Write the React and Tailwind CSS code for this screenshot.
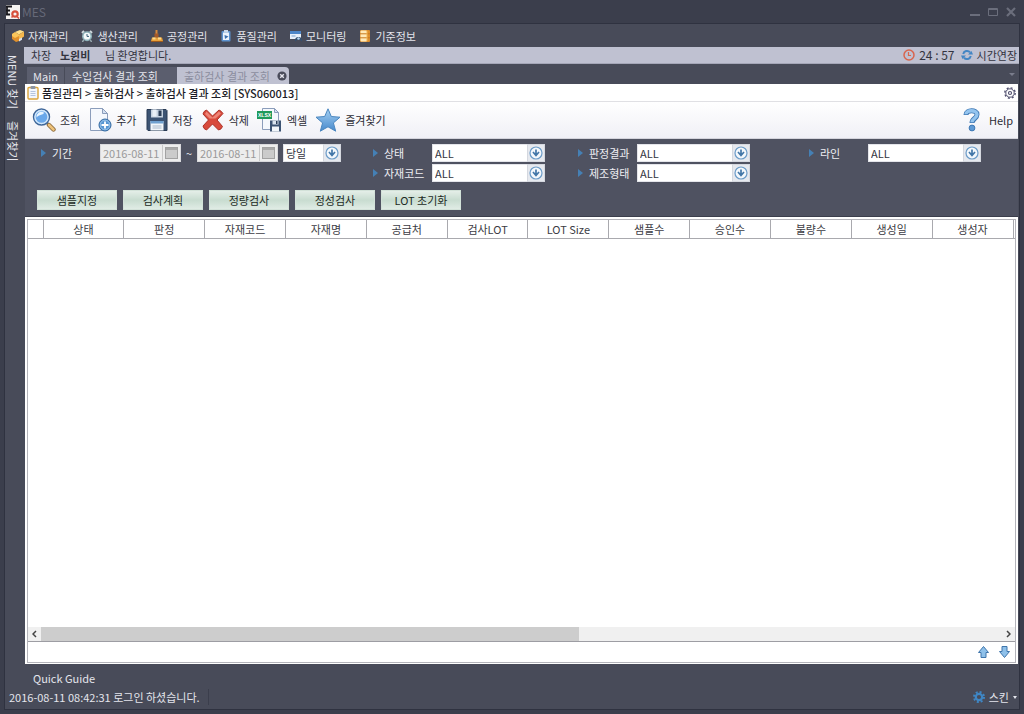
import { useState } from 'react';

const MENU = [
  { label: '자재관리', Icon: BoxIcon },
  { label: '생산관리', Icon: AlarmIcon },
  { label: '공정관리', Icon: ProcessIcon },
  { label: '품질관리', Icon: QualityIcon },
  { label: '모니터링', Icon: MonitorIcon },
  { label: '기준정보', Icon: DatabaseIcon },
];

const TOOLS = [
  { label: '조회', Icon: SearchIcon },
  { label: '추가', Icon: AddIcon },
  { label: '저장', Icon: SaveIcon },
  { label: '삭제', Icon: DeleteIcon },
  { label: '엑셀', Icon: ExcelIcon },
  { label: '즐겨찾기', Icon: StarIcon },
];

const ACTIONS = ['샘플지정', '검사계획', '정량검사', '정성검사', 'LOT 초기화'];

const COLUMNS = [
  '상태', '판정', '자재코드', '자재명', '공급처', '검사LOT',
  'LOT Size', '샘플수', '승인수', '불량수', '생성일', '생성자',
];

/* ---------- icons ---------- */

function LogoIcon() {
  return (
    <svg width="14" height="14" viewBox="0 0 14 14">
      <rect width="14" height="14" fill="#f6f4f3" />
      <path d="M0 1.500h6M0 5.500h4M0 9.500h4M1 1v9" stroke="#17171c" strokeWidth="1.800" fill="none" />
      <circle cx="9" cy="9" r="2.700" fill="none" stroke="#d8503c" strokeWidth="2.200" />
      <path d="M10.500 11l2.500 2.500M5.500 12.500l1.500-1.500" stroke="#d8503c" strokeWidth="1.600" />
    </svg>
  );
}

function BoxIcon() {
  return (
    <svg width="12" height="12" viewBox="0 0 12 12">
      <path d="M0 4l3-1 4 2v6l-3 1-4-3z" fill="#e0902c" />
      <path d="M3 2l5-2 4 1.500-5 3z" fill="#ffe08a" />
      <path d="M7 4.500l5-3v5L7 10z" fill="#f6b84c" />
      <path d="M0 4l3-2 4 2.500V6L3 8 0 6z" fill="#fbc65a" />
      <path d="M7 9l3-1.600v2.400L7 11.500z" fill="#dfe5ee" />
    </svg>
  );
}

function AlarmIcon() {
  return (
    <svg width="12" height="12" viewBox="0 0 12 12">
      <path d="M1 3L3 .8M11 3L9 .8" stroke="#cfd9dd" strokeWidth="2" />
      <path d="M2.500 10L1.500 12M9.500 10l1 2" stroke="#9fb2b8" strokeWidth="1.400" />
      <circle cx="6" cy="6.200" r="5" fill="#8fb3bb" />
      <circle cx="6" cy="6.200" r="3.400" fill="#f4fafa" />
      <path d="M6 4v2.400h2" stroke="#3b5f78" fill="none" />
    </svg>
  );
}

function ProcessIcon() {
  return (
    <svg width="12" height="12" viewBox="0 0 12 12">
      <path d="M4.500 0h2v6h-2z" fill="#d98a3a" />
      <path d="M3.500 3.500h4v4h-4z" fill="#a65a28" />
      <path d="M1 7.500h10l1 3.500H0z" fill="#e9a23b" />
      <path d="M1.500 7.500h3v2h-3zM7 7.500h3v2H7z" fill="#ffd98a" />
      <path d="M0 11h12v1H0z" fill="#9c5a1e" />
    </svg>
  );
}

function QualityIcon() {
  return (
    <svg width="12" height="12" viewBox="0 0 12 12">
      <rect x="1.500" y="1" width="9" height="10.500" rx="1" fill="#5d93cf" />
      <rect x="3" y="2.500" width="6" height="7.500" fill="#eaf3fc" />
      <rect x="4" y="0" width="4" height="2.500" fill="#c7d8ea" />
      <path d="M4.500 5l4 1.500L5 9z" fill="#3a6fae" />
    </svg>
  );
}

function MonitorIcon() {
  return (
    <svg width="12" height="12" viewBox="0 0 12 12">
      <rect y="1" width="11" height="8" fill="#e8f0fa" />
      <rect y="1" width="11" height="3" fill="#4d86c8" />
      <path d="M1.500 6h4" stroke="#7da5d3" />
      <path d="M5 11.500V9l2-2h3l2 2v2.500l-2-1.500H7z" fill="#34506f" />
      <circle cx="8.500" cy="8.500" r="1.300" fill="#b9d4f0" />
    </svg>
  );
}

function DatabaseIcon() {
  return (
    <svg width="12" height="12" viewBox="0 0 12 12">
      <rect x="1" y="0" width="10" height="12" rx="1" fill="#dd8f2f" />
      <rect x="1.500" y=".5" width="6.500" height="11" rx="1" fill="#ffe9b8" />
      <path d="M1 3.800h10M1 7.800h10" stroke="#c8781f" />
      <path d="M8 1v10" stroke="#f3b655" />
    </svg>
  );
}

function ClockIcon() {
  return (
    <svg width="12" height="12" viewBox="0 0 12 12" fill="none" stroke="#d9654e">
      <circle cx="6" cy="6" r="5" strokeWidth="1.500" />
      <path d="M5.500 3v3.500H8" strokeWidth="1.200" />
    </svg>
  );
}

function RefreshIcon() {
  return (
    <svg width="12" height="12" viewBox="0 0 12 12">
      <path d="M2.200 5A4 4 0 0 1 9 3.200M9.800 7A4 4 0 0 1 3 8.800" fill="none" stroke="#4486c4" strokeWidth="2" />
      <path d="M7 5.500h5L10.500 2zM5 6.500H0L1.500 10z" fill="#4486c4" />
    </svg>
  );
}

function CloseIcon() {
  return (
    <svg width="10" height="10" viewBox="0 0 10 10">
      <circle cx="5" cy="5" r="4.600" fill="#4a4c5b" />
      <path d="M3.200 3.200l3.600 3.600M6.800 3.200L3.200 6.800" stroke="#e6e6ee" strokeWidth="1.400" />
    </svg>
  );
}

function ClipboardIcon() {
  return (
    <svg width="12" height="14" viewBox="0 0 12 14">
      <rect x="1" y="1.500" width="10" height="11.500" rx="1" fill="#f2f6fd" stroke="#dba43a" strokeWidth="1.400" />
      <rect x="3.500" y="0" width="5" height="3" rx="1" fill="#8b94a3" />
      <path d="M3.500 5.500h5M3.500 7.500h5M3.500 9.500h5" stroke="#b4c4de" />
    </svg>
  );
}

function GearIcon({ solid }) {
  return (
    <svg width="12" height="12" viewBox="0 0 12 12">
      {solid ? (
        <>
          <circle cx="6" cy="6" r="5" fill="none" stroke="#3f86c4" strokeWidth="2" strokeDasharray="2 1.927" />
          <circle cx="6" cy="6" r="3.200" fill="none" stroke="#3f86c4" strokeWidth="2.200" />
        </>
      ) : (
        <>
          <circle cx="6" cy="6" r="5.200" fill="none" stroke="#51506f" strokeWidth="1.400" strokeDasharray="2 2.084" />
          <circle cx="6" cy="6" r="4.200" fill="#fff" stroke="#51506f" />
          <circle cx="6" cy="6" r="1.500" fill="none" stroke="#51506f" strokeWidth="1.200" />
        </>
      )}
    </svg>
  );
}

function SearchIcon() {
  return (
    <svg width="24" height="24" viewBox="0 0 24 24">
      <path d="M15 15l2 2" stroke="#6d7684" strokeWidth="2.500" />
      <path d="M17 17l4.500 4.500" stroke="#8b6a3c" strokeWidth="4.400" strokeLinecap="round" />
      <path d="M17 17l4.500 4.500" stroke="#eec27a" strokeWidth="2.600" strokeLinecap="round" />
      <circle cx="9.500" cy="9" r="8" fill="#8fc0f0" stroke="#3f6698" strokeWidth="1.400" />
      <circle cx="9.500" cy="9" r="6.500" fill="#6aa8ea" stroke="#d5e8fa" strokeWidth="1.300" />
      <path d="M4.500 9.500a5 5 0 0 1 7-5.300c1.500 1-1 2.300-3 2.800s-3 1.500-4 2.500z" fill="#e9f5ff" />
    </svg>
  );
}

function AddIcon() {
  return (
    <svg width="24" height="24" viewBox="0 0 24 24">
      <path d="M2.500.500h12l5 5v17h-17z" fill="#f5f8fd" stroke="#8b9dbb" />
      <path d="M14.500.500v5h5z" fill="#d4e0f1" stroke="#8b9dbb" />
      <circle cx="17" cy="17" r="6" fill="#5796d2" stroke="#34689f" />
      <circle cx="17" cy="17" r="4.800" fill="none" stroke="#a6cdf0" strokeWidth=".8" />
      <path d="M17 13.500v7M13.500 17h7" stroke="#fff" strokeWidth="1.800" />
    </svg>
  );
}

function SaveIcon() {
  return (
    <svg width="24" height="24" viewBox="0 0 24 24">
      <path d="M2 1.500h19l1 1v20H3l-1-1z" fill="#3c5373" stroke="#293b54" />
      <rect x="6" y="1.500" width="12" height="8" fill="#c6d2e0" />
      <rect x="7.500" y="1.500" width="4" height="7" fill="#e9eff6" />
      <rect x="13.500" y="2.500" width="3" height="5.500" fill="#2b3d57" />
      <rect x="5.500" y="13" width="13" height="9.500" fill="#f2f6fa" />
      <rect x="5.500" y="13" width="13" height="2.500" fill="#6fa0d0" />
      <path d="M7.500 18h9M7.500 20h9" stroke="#a9b8ca" />
    </svg>
  );
}

function DeleteIcon() {
  return (
    <svg width="24" height="24" viewBox="0 0 24 24">
      <path
        d="M5.500 2L11.500 8 18 2q2 .5 4 3.500L16 12l5.500 6.500q-1 3-4 3.500l-6-6-6 6Q2.500 21 2 18l5.500-6L2 6q.5-3 3.500-4z"
        fill="#d84a3c"
        stroke="#ad3026"
      />
      <path d="M5.500 3.500l6 6 6.500-6 2 2-5.500 5H8.500L4 6z" fill="#ee8476" />
    </svg>
  );
}

function ExcelIcon() {
  return (
    <svg width="26" height="24" viewBox="0 0 26 24">
      <path d="M5.500.500h12l4 4v17h-16z" fill="#f5f8fd" stroke="#8b9dbb" />
      <path d="M17.500.500v4h4z" fill="#d4e0f1" stroke="#8b9dbb" />
      <rect x="0" y="3" width="15" height="8" fill="#1f9a5c" />
      <text x="1" y="9" fill="#fff" fontSize="5" fontWeight="700" fontFamily="Liberation Sans">XLSX</text>
      <rect x="13" y="12.500" width="11" height="11" fill="#3c5373" />
      <rect x="15.500" y="12.500" width="6" height="4" fill="#dbe5f0" />
      <rect x="19" y="13" width="1.500" height="3" fill="#2b3d57" />
      <rect x="15" y="18.500" width="7" height="5" fill="#f2f6fa" />
    </svg>
  );
}

function StarIcon() {
  return (
    <svg width="26" height="24" viewBox="0 0 26 24">
      <defs>
        <linearGradient id="starFill" x1="0" y1="0" x2="0" y2="1">
          <stop offset="0" stopColor="#a5d0f3" />
          <stop offset="1" stopColor="#4789cc" />
        </linearGradient>
      </defs>
      <path
        d="M13 .8l3.300 7.700 8.700.7-6.600 5.700 2.300 8.300L13 18.800l-7.700 4.400 2.300-8.300L1 9.200l8.700-.7z"
        fill="url(#starFill)"
        stroke="#4a86bf"
        strokeLinejoin="round"
      />
    </svg>
  );
}

function HelpIcon() {
  return (
    <svg width="18" height="24" viewBox="0 0 18 24">
      <path
        d="M3 7C3 1.500 14 1.500 14 6.500c0 4-5 4-5 8.500"
        fill="none"
        stroke="#3f78b4"
        strokeWidth="5"
      />
      <path
        d="M3 6.300C3 1.500 14 1.500 14 6.500c0 4-5 4-5 7.800"
        fill="none"
        stroke="#94c4ee"
        strokeWidth="3.400"
      />
      <circle cx="9" cy="20" r="2.900" fill="#5e9ad6" stroke="#3f78b4" />
    </svg>
  );
}

function DropIcon() {
  return (
    <svg width="14" height="14" viewBox="0 0 14 14">
      <circle cx="7" cy="7" r="6" fill="#f4f8fc" stroke="#6c9cc8" strokeWidth="1.200" />
      <path d="M7 3.500v6M4 6l3 3.500L10 6" fill="none" stroke="#4377a8" strokeWidth="1.700" />
    </svg>
  );
}

function CalendarIcon() {
  return (
    <svg width="13" height="12" viewBox="0 0 13 12">
      <rect x=".5" y=".5" width="12" height="11" fill="#cbcbcb" stroke="#a2a2a2" />
      <rect x="1" y="1" width="11" height="2" fill="#a9a9a9" />
    </svg>
  );
}

function ArrowIcon({ down }) {
  return (
    <svg width="11" height="12" viewBox="0 0 11 12">
      <path
        d={down ? 'M3 .5h5v5h2.500l-5 6-5-6H3z' : 'M3 11.500h5v-5h2.500l-5-6-5 6H3z'}
        fill="#8fc1ea"
        stroke="#3f75ab"
      />
    </svg>
  );
}

/* ---------- form parts ---------- */

function Combo({ id, label, options, className }) {
  return (
    <div className={`relative h-[18px] ${className}`}>
      <select
        id={id}
        aria-label={label}
        className="block h-full w-full appearance-none border border-[#e4e5ea] bg-white pl-0.5 pr-5 text-[11px] leading-4 text-[#33343e] outline-none"
      >
        {options.map((o) => (
          <option key={o}>{o}</option>
        ))}
      </select>
      <span className="pointer-events-none absolute inset-y-0 right-0 flex w-[18px] items-center justify-center border border-[#d5d8df] bg-[#e6e9ef]">
        <DropIcon />
      </span>
    </div>
  );
}

function FieldLabel({ htmlFor, children }) {
  return (
    <label htmlFor={htmlFor} className="flex w-[59px] shrink-0 items-center gap-[6px] whitespace-nowrap text-[#eeeef3]">
      <svg width="5" height="8" viewBox="0 0 5 8" className="shrink-0">
        <path d="M0 0l5 4-5 4z" fill="#4580b5" />
      </svg>
      {children}
    </label>
  );
}

function ComboField({ id, label }) {
  return (
    <div className="flex items-center">
      <FieldLabel htmlFor={id}>{label}</FieldLabel>
      <Combo id={id} options={['ALL']} className="w-[113px]" />
    </div>
  );
}

function DateBox({ id, label }) {
  return (
    <div className="flex h-[18px] w-[81px] border border-[#d9d9dc] bg-[#ededed]">
      <input
        id={id}
        aria-label={label}
        type="text"
        disabled
        defaultValue="2016-08-11"
        className="min-w-0 flex-1 pl-0.5 text-[11px] leading-4 text-[#9a9a9a]"
      />
      <button disabled aria-label="달력" className="flex w-[18px] items-center justify-center border-l border-[#c9c9c9]">
        <CalendarIcon />
      </button>
    </div>
  );
}

/* ---------- page ---------- */

export default function App() {
  const [tab, setTab] = useState('out');

  return (
    <div className="flex min-h-screen flex-col bg-[#3b3e4c] px-1 pb-1 font-['Noto_Sans_CJK_KR',sans-serif] text-[11px] leading-4 text-[#e4e5ec]">
      <header className="flex h-[23px] items-center justify-between pl-0.5 pr-1">
        <div className="flex items-center gap-0.5 text-[12px] text-[#666978]">
          <LogoIcon />
          <span>MES</span>
        </div>
        <div className="flex items-center gap-2 text-[#6b6e7c]">
          <button aria-label="최소화">
            <svg width="10" height="10" viewBox="0 0 10 10"><path d="M0 8h10" stroke="currentColor" strokeWidth="2" /></svg>
          </button>
          <button aria-label="최대화">
            <svg width="10" height="10" viewBox="0 0 10 10" fill="none" stroke="currentColor">
              <path d="M.5 1.500h9v7h-9zM0 2.500h10" />
            </svg>
          </button>
          <button aria-label="닫기">
            <svg width="10" height="10" viewBox="0 0 10 10"><path d="M1 1l8 8M9 1L1 9" stroke="currentColor" strokeWidth="2.200" /></svg>
          </button>
        </div>
      </header>

      <div className="flex flex-1 flex-col border border-[#2f3240] bg-[#484b59]">
        <nav className="flex h-[23px] items-center gap-[13px] pl-[7px]">
          {MENU.map(({ label, Icon }) => (
            <button key={label} className="flex items-center gap-1">
              <Icon />
              {label}
            </button>
          ))}
        </nav>

        <div className="flex flex-1">
          <aside className="flex w-[19px] shrink-0 flex-col items-start gap-3 pt-2">
            <button className="[text-orientation:sideways] [writing-mode:vertical-rl]">MENU 찾기</button>
            <button className="[text-orientation:sideways] [writing-mode:vertical-rl]">즐겨찾기</button>
          </aside>

          <div className="flex min-w-0 flex-1 flex-col">
            <div className="flex h-[17px] items-center justify-between border-b border-[#a5a7b8] bg-[#bfc1d1] pl-[7px] pr-0.5 text-[#33343f]">
              <p className="flex">
                <span className="w-[29px]">차장</span>
                <b className="w-[45px]">노윈비</b>
                <span>님 환영합니다.</span>
              </p>
              <div className="flex items-center gap-[6px]">
                <span className="flex items-center gap-1 text-[12px]">
                  <ClockIcon />
                  24 : 57
                </span>
                <button className="flex items-center gap-1">
                  <RefreshIcon />
                  시간연장
                </button>
              </div>
            </div>

            <div className="flex h-5 items-end justify-between pl-[3px] pr-1" role="tablist">
              <div className="flex h-[17px]">
                <button role="tab" aria-selected={tab === 'main'} onClick={() => setTab('main')} className="w-[38px] border-r border-[#484b59] bg-[#5b5e6e]">
                  Main
                </button>
                <button role="tab" aria-selected={tab === 'in'} onClick={() => setTab('in')} className="w-[112px] bg-[#5b5e6e] pl-[7px] text-left">
                  수입검사 결과 조회
                </button>
                <div className="flex w-[112px] items-center justify-between rounded-tr-sm bg-[#bfc1d1] pl-[7px] pr-0.5 text-[#8c8e9f]">
                  <button role="tab" aria-selected={tab === 'out'} onClick={() => setTab('out')}>
                    출하검사 결과 조회
                  </button>
                  <button aria-label="탭 닫기">
                    <CloseIcon />
                  </button>
                </div>
              </div>
              <svg width="6" height="3" viewBox="0 0 6 3" className="mb-2">
                <path d="M0 0h6L3 3z" fill="#7a7d8c" />
              </svg>
            </div>

            <main className="mr-px ml-px flex flex-1 flex-col bg-white">
              <div className="flex h-[18px] items-center justify-between border-b border-[#e0e0e4] pl-0.5 pr-0.5">
                <div className="flex items-center gap-[3px] font-medium text-[#1c1c26]">
                  <ClipboardIcon />
                  품질관리 &gt; 출하검사 &gt; 출하검사 결과 조회 [SYS060013]
                </div>
                <button aria-label="설정">
                  <GearIcon />
                </button>
              </div>

              <div className="flex h-[37px] items-center justify-between border-b border-[#d4d4dc] bg-linear-to-b from-white to-[#f0f0f6] pl-[7px] pr-[5px] text-[#2c2c36]">
                <div className="flex gap-2">
                  {TOOLS.map(({ label, Icon }) => (
                    <button key={label} className="flex items-center gap-1">
                      <Icon />
                      {label}
                    </button>
                  ))}
                </div>
                <button className="flex items-center gap-2">
                  <HelpIcon />
                  Help
                </button>
              </div>

              <section className="border-b border-[#3b3e4c] bg-[#4f5261] pb-[6px] pt-[5px]">
                <div className="grid grid-cols-[332fr_205fr_231fr_209fr] items-start pl-4">
                  <div className="flex h-[18px] items-center">
                    <FieldLabel htmlFor="from">기간</FieldLabel>
                    <DateBox id="from" label="시작일" />
                    <span className="w-4 text-center">~</span>
                    <DateBox id="to" label="종료일" />
                    <Combo id="range" label="기간 선택" options={['당일']} className="ml-[5px] w-[58px]" />
                  </div>
                  <div className="flex flex-col gap-0.5">
                    <ComboField id="state" label="상태" />
                    <ComboField id="material" label="자재코드" />
                  </div>
                  <div className="flex flex-col gap-0.5">
                    <ComboField id="result" label="판정결과" />
                    <ComboField id="form" label="제조형태" />
                  </div>
                  <ComboField id="line" label="라인" />
                </div>
                <div className="mt-2 flex gap-[6px] pl-3">
                  {ACTIONS.map((a) => (
                    <button
                      key={a}
                      className="h-5 w-20 border border-[#d3e2d9] bg-linear-to-b from-[#e4eee8] via-[#c8dcd0] to-[#e0ece5] text-[#1d2a24]"
                    >
                      {a}
                    </button>
                  ))}
                </div>
              </section>

              <section className="mx-0.5 mb-px mt-0.5 flex flex-1 flex-col border border-[#b4b4ba] text-[#3c3c44]">
                <table className="w-full table-fixed border-collapse">
                  <thead>
                    <tr className="h-[18px]">
                      <th className="w-[15px] border-b border-r border-[#a9a9ae]" />
                      {COLUMNS.map((c) => (
                        <th key={c} className="border-b border-r border-[#a9a9ae] p-0 font-normal">
                          {c}
                        </th>
                      ))}
                      <th className="w-0.5 border-b border-[#a9a9ae]" />
                    </tr>
                  </thead>
                  <tbody />
                </table>
                <div className="flex-1" />
                <div className="flex h-[15px] items-stretch border-b border-[#9d9da3] bg-[#f0f0f0] text-[#444]">
                  <button aria-label="왼쪽" className="flex w-[13px] items-center justify-center">
                    <svg width="5" height="8" viewBox="0 0 5 8" fill="none" stroke="currentColor" strokeWidth="1.500"><path d="M4 1L1 4l3 3" /></svg>
                  </button>
                  <div className="flex-1">
                    <div className="h-full w-[56%] bg-[#cdcdcd]" />
                  </div>
                  <button aria-label="오른쪽" className="flex w-[13px] items-center justify-center">
                    <svg width="5" height="8" viewBox="0 0 5 8" fill="none" stroke="currentColor" strokeWidth="1.500"><path d="M1 1l3 3-3 3" /></svg>
                  </button>
                </div>
                <div className="flex h-5 items-center justify-end gap-[10px] pr-[5px]">
                  <button aria-label="위로"><ArrowIcon /></button>
                  <button aria-label="아래로"><ArrowIcon down /></button>
                </div>
              </section>
            </main>
          </div>
        </div>

        <footer className="pl-1">
          <div className="h-[25px] pl-6 pt-[6px]">Quick Guide</div>
          <div className="flex h-5 items-start justify-between pr-0.5">
            <span className="border-r border-[#3b3e4c] pr-2">2016-08-11 08:42:31 로그인 하셨습니다.</span>
            <button className="flex items-center gap-1">
              <GearIcon solid />
              스킨
              <svg width="4" height="3" viewBox="0 0 4 3"><path d="M0 0h4L2 3z" fill="#e4e5ec" /></svg>
            </button>
          </div>
        </footer>
      </div>
    </div>
  );
}
